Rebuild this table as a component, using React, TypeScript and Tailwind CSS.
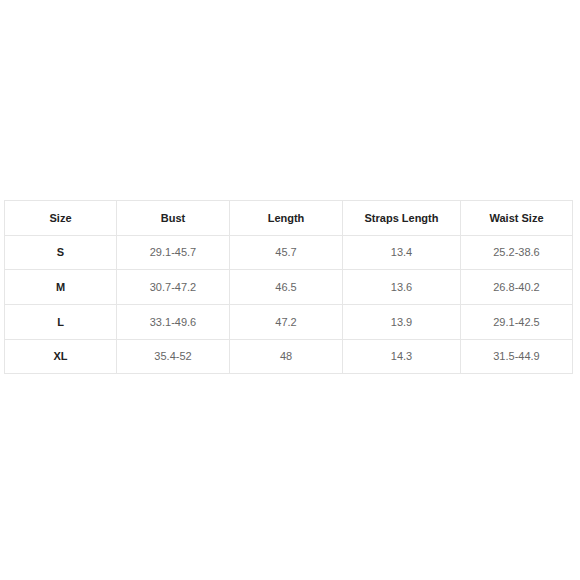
const headers = ['Size', 'Bust', 'Length', 'Straps Length', 'Waist Size'];

const rows = [
  ['S', '29.1-45.7', '45.7', '13.4', '25.2-38.6'],
  ['M', '30.7-47.2', '46.5', '13.6', '26.8-40.2'],
  ['L', '33.1-49.6', '47.2', '13.9', '29.1-42.5'],
  ['XL', '35.4-52', '48', '14.3', '31.5-44.9'],
];

const widths = ['w-[112px]', 'w-[113px]', 'w-[113px]', 'w-[118px]', 'w-[112px]'];

export default function App() {
  return (
    <div className="w-[580px] h-[580px] bg-white pt-[200px] pl-[4px] font-['Liberation_Sans',Arial,sans-serif]">
      <table className="table-fixed border-collapse w-[569px] text-[11px]">
        <colgroup>
          {widths.map((w, i) => (
            <col key={i} className={w} />
          ))}
        </colgroup>
        <thead>
          <tr className="h-[34.7px]">
            {headers.map((h) => (
              <th key={h} className="border border-[#e6e6e6] text-center font-bold text-[#222]">
                {h}
              </th>
            ))}
          </tr>
        </thead>
        <tbody>
          {rows.map((r) => (
            <tr key={r[0]} className="h-[34.7px]">
              {r.map((c, i) => (
                <td
                  key={i}
                  className={
                    i === 0
                      ? 'border border-[#e6e6e6] text-center font-bold text-[#222]'
                      : 'border border-[#e6e6e6] text-center text-[#666]'
                  }
                >
                  {c}
                </td>
              ))}
            </tr>
          ))}
        </tbody>
      </table>
    </div>
  );
}
